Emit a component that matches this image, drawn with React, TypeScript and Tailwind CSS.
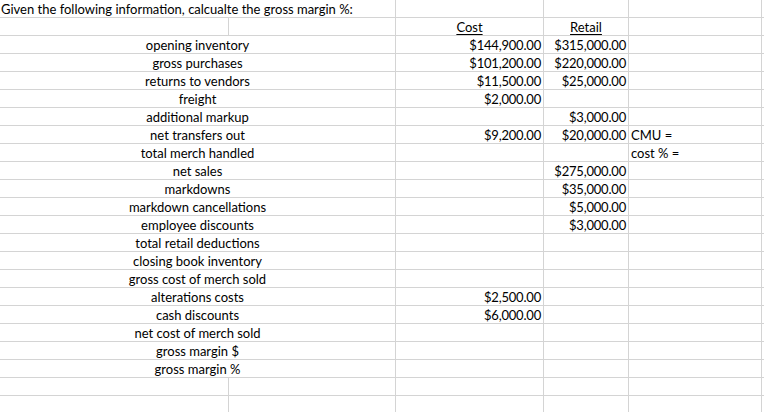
import React from 'react';

type Row = {
  label?: string;
  cost?: string;
  retail?: string;
  note?: string;
};

const rows: Row[] = [
  { label: 'opening inventory', cost: '$144,900.00', retail: '$315,000.00' },
  { label: 'gross purchases', cost: '$101,200.00', retail: '$220,000.00' },
  { label: 'returns to vendors', cost: '$11,500.00', retail: '$25,000.00' },
  { label: 'freight', cost: '$2,000.00' },
  { label: 'additional markup', retail: '$3,000.00' },
  { label: 'net transfers out', cost: '$9,200.00', retail: '$20,000.00', note: 'CMU =' },
  { label: 'total merch handled', note: 'cost % =' },
  { label: 'net sales', retail: '$275,000.00' },
  { label: 'markdowns', retail: '$35,000.00' },
  { label: 'markdown cancellations', retail: '$5,000.00' },
  { label: 'employee discounts', retail: '$3,000.00' },
  { label: 'total retail deductions' },
  { label: 'closing book inventory' },
  { label: 'gross cost of merch sold' },
  { label: 'alterations costs', cost: '$2,500.00' },
  { label: 'cash discounts', cost: '$6,000.00' },
  { label: 'net cost of merch sold' },
  { label: 'gross margin $' },
  { label: 'gross margin %' },
];

const rowCls = 'flex h-[18px] shrink-0 border-b border-[#d4d4d4]';
const cell = 'h-full border-r border-[#d4d4d4] flex items-end leading-[15px] whitespace-nowrap';
const money = 'justify-end pr-[2px] tracking-[-0.2px]';

function Tail({ retail, note, cost }: { cost?: string; retail?: string; note?: string }) {
  return (
    <>
      <div className={`${cell} w-[148px] ${money}`}>{cost}</div>
      <div className={`${cell} w-[85px] ${money}`}>{retail}</div>
      <div className={`${cell} w-[133px] pl-[2px]`}>{note}</div>
      <div className="h-full flex-1" />
    </>
  );
}

export default function App() {
  return (
    <div
      className="w-[764px] h-[412px] overflow-hidden bg-white text-black text-[13px] flex flex-col"
      style={{ fontFamily: 'Lato, "Liberation Sans", sans-serif' }}
    >
      <div className={rowCls}>
        <div className={`${cell} w-[396px] pl-[1px]`}>
          Given the following information, calcualte the gross margin %:
        </div>
        <Tail />
      </div>
      <div className={rowCls}>
        <div className={`${cell} w-[229px]`} />
        <div className={`${cell} w-[167px]`} />
        <div className={`${cell} w-[148px] justify-center`}>
          <span className="underline underline-offset-2">Cost</span>
        </div>
        <div className={`${cell} w-[85px] justify-center`}>
          <span className="underline underline-offset-2">Retail</span>
        </div>
        <div className={`${cell} w-[133px]`} />
        <div className="h-full flex-1" />
      </div>
      {rows.map((r) => (
        <div key={r.label} className={rowCls}>
          <div className={`${cell} w-[396px] justify-center`}>{r.label}</div>
          <Tail cost={r.cost} retail={r.retail} note={r.note} />
        </div>
      ))}
      {[0, 1].map((i) => (
        <div key={i} className={rowCls}>
          <div className={`${cell} w-[229px]`} />
          <div className={`${cell} w-[167px]`} />
          <Tail />
        </div>
      ))}
    </div>
  );
}
